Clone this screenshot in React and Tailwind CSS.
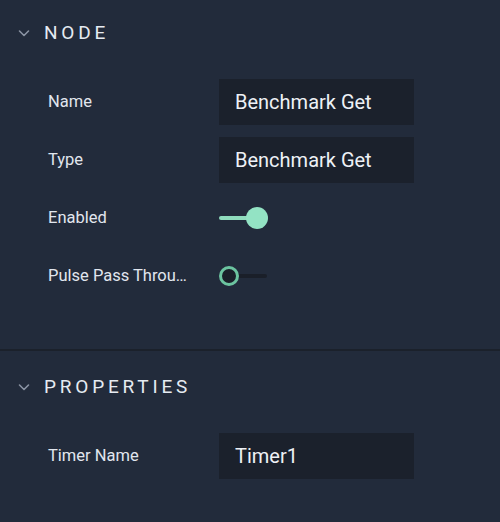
import React from "react";

const Chevron = () => (
  <svg width="14" height="14" viewBox="0 0 14 14" fill="none" className="text-[#8a93a3]">
    <path d="M2.5 5 L7 9.5 L11.5 5" stroke="currentColor" strokeWidth="1.6" strokeLinecap="round" strokeLinejoin="round" />
  </svg>
);

const Header = ({ title }) => (
  <div className="flex h-[66px] items-center gap-[13px] pl-[17px]">
    <Chevron />
    <span className="text-[19px] tracking-[0.2em] text-[#e6ebf2]">{title}</span>
  </div>
);

const Row = ({ label, children }) => (
  <div className="flex h-[46px] items-center">
    <div className="w-[193px] truncate pl-[48px] pt-px text-[16.5px] text-[#e1e6ee]">{label}</div>
    <div className="pl-[26px]">{children}</div>
  </div>
);

const Field = ({ value }) => (
  <div className="flex h-[46px] w-[195px] items-center bg-[#1b212c] px-4 text-[20px] text-[#eef1f6]">{value}</div>
);

const Toggle = ({ on }) =>
  on ? (
    <div className="relative h-[22px] w-[50px]">
      <div className="absolute left-0 top-[9px] h-[4px] w-[40px] rounded-full bg-[#8fdcbd]" />
      <div className="absolute left-[27px] top-0 h-[22px] w-[22px] rounded-full bg-[#93e3c4]" />
    </div>
  ) : (
    <div className="relative h-[22px] w-[50px]">
      <div className="absolute left-[10px] top-[9px] h-[4px] w-[38px] rounded-full bg-[#1a1f29]" />
      <div className="absolute left-0 top-[1px] h-[20px] w-[20px] rounded-full border-[3px] border-[#6cc4a0] bg-[#1a1f29]" />
    </div>
  );

export default function App() {
  return (
    <div className="h-[522px] w-[500px] bg-[#222b3b]" style={{ fontFamily: "Roboto, sans-serif" }}>
      <Header title="NODE" />
      <div className="mt-[13px] flex flex-col gap-[12px] pb-[50px]">
        <Row label="Name">
          <Field value="Benchmark Get" />
        </Row>
        <Row label="Type">
          <Field value="Benchmark Get" />
        </Row>
        <Row label="Enabled">
          <Toggle on />
        </Row>
        <Row label="Pulse Pass Through">
          <Toggle on={false} />
        </Row>
      </div>
      <div className="h-[2px] bg-[#1b212b]" />
      <div className="pt-[3px]">
        <Header title="PROPERTIES" />
      </div>
      <div className="mt-[13px]">
        <Row label="Timer Name">
          <Field value="Timer1" />
        </Row>
      </div>
    </div>
  );
}
